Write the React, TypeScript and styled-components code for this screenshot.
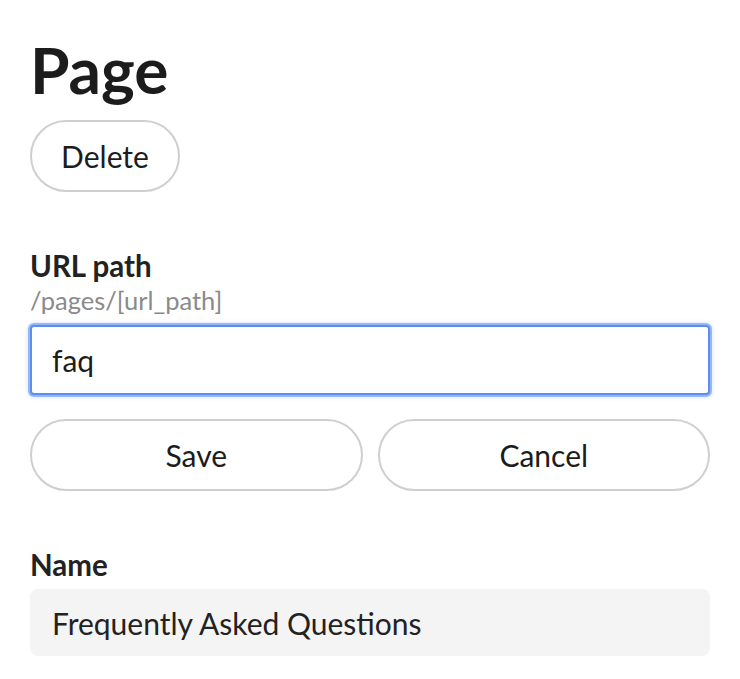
import React from "react";
import styled, { createGlobalStyle } from "styled-components";

const GlobalStyle = createGlobalStyle`
  body {
    margin: 0;
    background: #ffffff;
    font-family: Lato, "Liberation Sans", sans-serif;
    color: #222222;
  }
`;

const Container = styled.div`
  display: flex;
  flex-direction: column;
  padding: 34px 30px 0;
`;

const Title = styled.h1`
  margin: 0;
  font-size: 64px;
  line-height: 72px;
  font-weight: 700;
  color: #1c1c1c;
`;

const PillButton = styled.button<{ $grow?: boolean }>`
  height: 72px;
  ${({ $grow }) => ($grow ? "flex: 1;" : "width: 150px;")}
  background: #ffffff;
  border: 2px solid #cfcfcf;
  border-radius: 36px;
  font-family: inherit;
  font-size: 30px;
  color: #1c1c1c;
  padding: 0;
`;

const TopRow = styled.div`
  display: flex;
  margin-top: 14px;
`;

const Field = styled.div`
  display: flex;
  flex-direction: column;
  margin-top: 57px;
`;

const Label = styled.div`
  font-size: 29.5px;
  line-height: 33px;
  font-weight: 700;
  color: #222222;
`;

const Hint = styled.div`
  margin-top: 4px;
  font-size: 25.5px;
  line-height: 28px;
  color: #8a8a8a;
`;

const TextInput = styled.input`
  box-sizing: border-box;
  margin-top: 11px;
  width: 100%;
  height: 70px;
  padding: 0 20px;
  border: 2px solid #5b8ef0;
  border-radius: 4px;
  box-shadow: 0 0 0 2px rgba(91, 142, 240, 0.55), 0 0 4px 2px rgba(91, 142, 240, 0.3);
  outline: none;
  font-family: inherit;
  font-size: 30px;
  color: #1c1c1c;
  caret-color: #1c1c1c;
`;

const ButtonRow = styled.div`
  display: flex;
  gap: 15px;
  margin-top: 24px;
`;

const ReadOnlyValue = styled.div`
  margin-top: 8px;
  height: 67px;
  display: flex;
  align-items: center;
  padding: 0 22px;
  background: #f4f4f4;
  border-radius: 8px;
  font-size: 30px;
  color: #222222;
`;

export default function App() {
  return (
    <>
      <GlobalStyle />
      <Container>
        <Title>Page</Title>
        <TopRow>
          <PillButton>Delete</PillButton>
        </TopRow>

        <Field>
          <Label>URL path</Label>
          <Hint>/pages/[url_path]</Hint>
          <TextInput defaultValue="faq" autoFocus />
        </Field>

        <ButtonRow>
          <PillButton $grow>Save</PillButton>
          <PillButton $grow>Cancel</PillButton>
        </ButtonRow>

        <Field>
          <Label>Name</Label>
          <ReadOnlyValue>Frequently Asked Questions</ReadOnlyValue>
        </Field>
      </Container>
    </>
  );
}
